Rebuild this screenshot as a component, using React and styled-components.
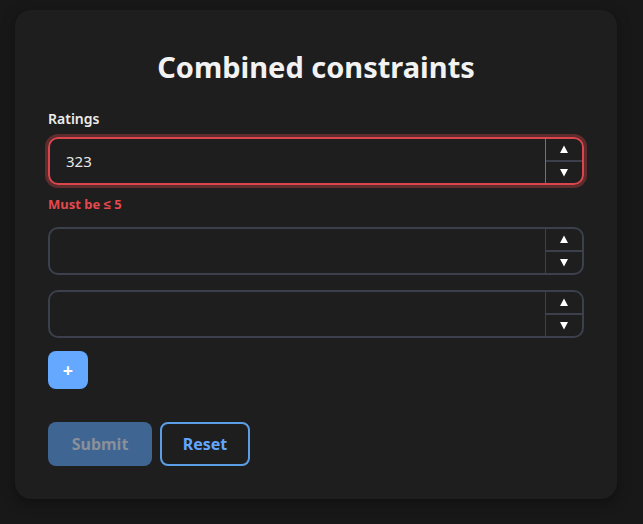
import React, { useState } from 'react';
import styled, { createGlobalStyle } from 'styled-components';

const GlobalStyle = createGlobalStyle`
  html, body {
    margin: 0;
    background: #181818;
    font-family: 'Noto Sans', 'Liberation Sans', sans-serif;
  }
  * { box-sizing: border-box; }
`;

const Page = styled.div`
  padding: 10px 0 24px 15px;
`;

const Card = styled.form`
  width: 602px;
  background: #1e1e1e;
  border-radius: 16px;
  padding: 32px 33px 33px;
  box-shadow: 0 4px 14px rgba(0, 0, 0, 0.35);
`;

const Title = styled.h2`
  margin: 7px 0 24px;
  font-size: 29px;
  line-height: 36px;
  font-weight: 700;
  color: #f2f2f2;
  text-align: center;
`;

const Label = styled.label`
  display: block;
  font-size: 14px;
  line-height: 20px;
  font-weight: 600;
  color: #ececec;
  margin-bottom: 8px;
`;

const Field = styled.div`
  display: flex;
  height: 48px;
  border: 2px solid ${(p) => (p.$invalid ? '#d9474c' : '#3b404c')};
  border-radius: 10px;
  box-shadow: ${(p) => (p.$invalid ? '0 0 0 3px rgba(217, 71, 76, 0.35)' : 'none')};
  overflow: hidden;
  margin-top: ${(p) => p.$top || 0}px;
`;

const Input = styled.input`
  flex: 1;
  min-width: 0;
  border: none;
  outline: none;
  background: transparent;
  color: #e8e8e8;
  font-family: inherit;
  font-size: 15px;
  padding: 0 16px;
`;

const Spinner = styled.div`
  width: 37px;
  display: flex;
  flex-direction: column;
  border-left: 1px solid ${(p) => (p.$invalid ? '#d9474c' : '#3b404c')};
`;

const Step = styled.button`
  flex: 1;
  display: flex;
  align-items: center;
  justify-content: center;
  background: transparent;
  border: none;
  padding: 0;
  cursor: pointer;
  & + & {
    border-top: 2px solid #3b404c;
  }
`;

const ErrorText = styled.div`
  margin-top: 10px;
  font-size: 13px;
  line-height: 18px;
  font-weight: 700;
  color: #e5484d;
`;

const AddButton = styled.button`
  margin-top: 13px;
  width: 40px;
  height: 38px;
  border: none;
  border-radius: 8px;
  background: #64a8ff;
  color: #ffffff;
  font-family: inherit;
  font-size: 18px;
  font-weight: 700;
  line-height: 1;
  display: flex;
  align-items: center;
  justify-content: center;
  cursor: pointer;
`;

const Actions = styled.div`
  display: flex;
  gap: 8px;
  margin-top: 33px;
`;

const ActionButton = styled.button`
  height: 44px;
  width: ${(p) => p.$width}px;
  border-radius: 8px;
  font-family: inherit;
  font-size: 16px;
  font-weight: 700;
  border: ${(p) => (p.$outline ? '2px solid #5b9ee6' : 'none')};
  background: ${(p) => (p.$outline ? 'transparent' : '#3f6592')};
  color: ${(p) => (p.$outline ? '#62a6ff' : '#8a9099')};
  cursor: ${(p) => (p.disabled ? 'not-allowed' : 'pointer')};
`;

const Arrow = ({ down }) => (
  <svg width="10" height="9" viewBox="0 0 10 9">
    <polygon points={down ? '1,1 9,1 5,8.5' : '1,8 9,8 5,0.5'} fill="#ffffff" />
  </svg>
);

const NumberField = ({ value, invalid, top, onChange }) => (
  <Field $invalid={invalid} $top={top}>
    <Input type="text" value={value} onChange={(e) => onChange(e.target.value)} />
    <Spinner $invalid={invalid}>
      <Step type="button" onClick={() => onChange(String((Number(value) || 0) + 1))}>
        <Arrow />
      </Step>
      <Step type="button" onClick={() => onChange(String((Number(value) || 0) - 1))}>
        <Arrow down />
      </Step>
    </Spinner>
  </Field>
);

const App = () => {
  const [ratings, setRatings] = useState(['323', '', '']);

  const update = (i, v) => setRatings((r) => r.map((x, j) => (j === i ? v : x)));
  const isInvalid = (v) => v !== '' && Number(v) > 5;

  return (
    <>
      <GlobalStyle />
      <Page>
        <Card onSubmit={(e) => e.preventDefault()}>
          <Title>Combined constraints</Title>
          <Label>Ratings</Label>
          {ratings.map((v, i) => (
            <React.Fragment key={i}>
              <NumberField
                value={v}
                invalid={isInvalid(v)}
                top={i === 0 ? 0 : i === 1 ? 14 : 15}
                onChange={(val) => update(i, val)}
              />
              {isInvalid(v) && <ErrorText>Must be ≤ 5</ErrorText>}
            </React.Fragment>
          ))}
          <AddButton type="button" onClick={() => setRatings((r) => [...r, ''])}>
            +
          </AddButton>
          <Actions>
            <ActionButton type="submit" $width={104} disabled>
              Submit
            </ActionButton>
            <ActionButton type="button" $width={90} $outline onClick={() => setRatings(['', '', ''])}>
              Reset
            </ActionButton>
          </Actions>
        </Card>
      </Page>
    </>
  );
};

export default App;
